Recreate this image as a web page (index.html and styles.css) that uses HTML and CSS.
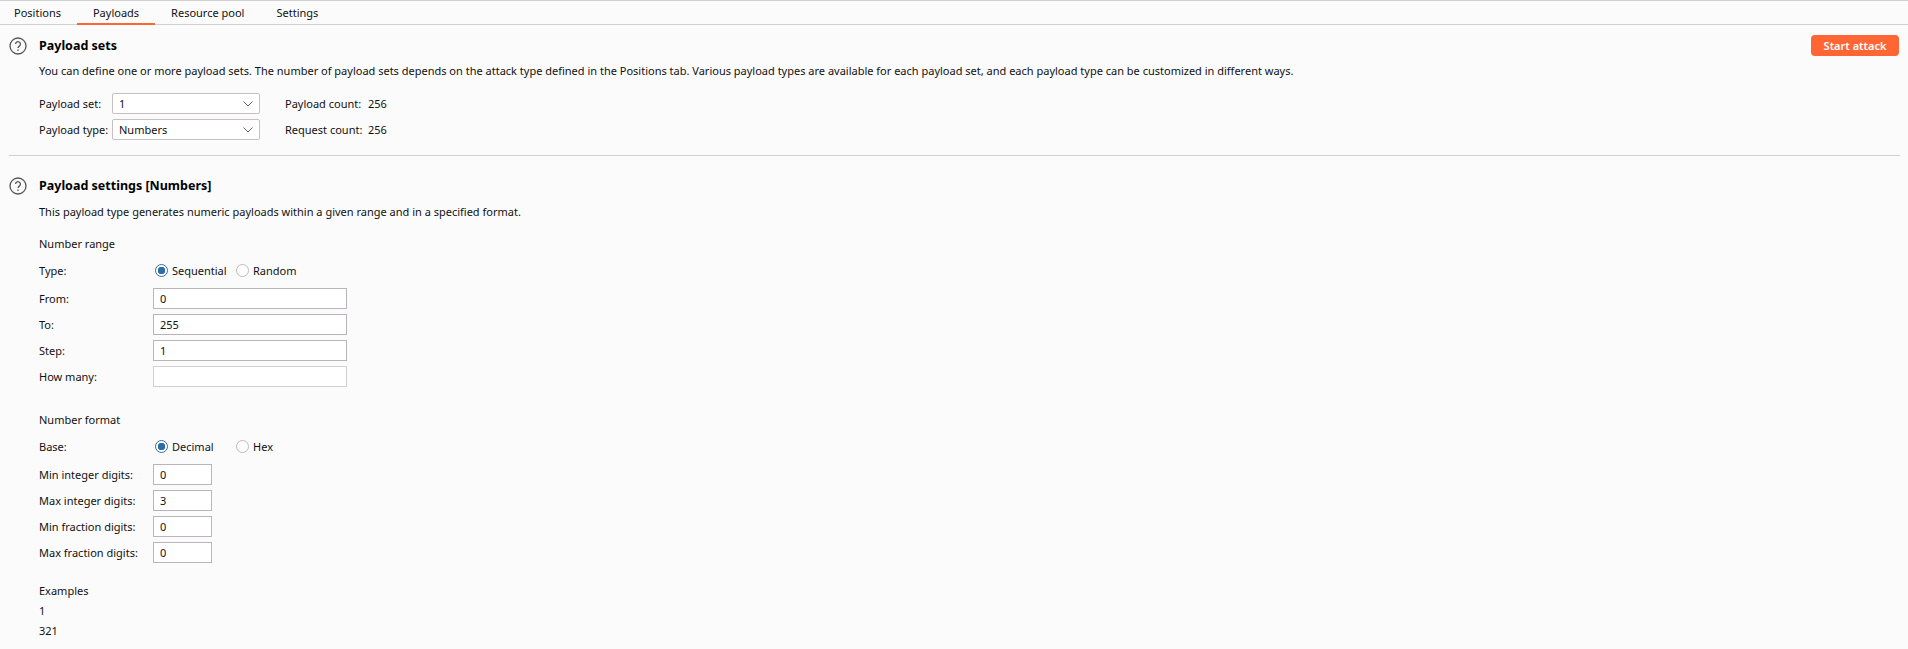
FILE: index.html
```html
<!DOCTYPE html>
<html lang="en">
  <head>
    <meta charset="UTF-8" />
    <title>Intruder payloads</title>
    <link rel="stylesheet" href="styles.css">
  </head>
  <body>
    <nav class="tabs">
      <a class="tab">Positions</a>
      <a class="tab tab-active">Payloads</a>
      <a class="tab">Resource pool</a>
      <a class="tab">Settings</a>
    </nav>

    <main class="content">
      <section class="section section-sets">
        <div class="section-head">
          <svg class="help" viewBox="0 0 18 18"><circle cx="9" cy="9" r="8" /><path d="M6.6 7.1a2.4 2.4 0 1 1 3.7 2c-.9.6-1.3 1-1.3 2" /><path d="M9 12.6v1.5" /></svg>
          <h2>Payload sets</h2>
          <button class="start-btn">Start attack</button>
        </div>
        <p class="desc">You can define one or more payload sets. The number of payload sets depends on the attack type defined in the Positions tab. Various payload types are available for each payload set, and each payload type can be customized in different ways.</p>
        <div class="set-row">
          <span class="set-label">Payload set:</span>
          <div class="select"><span>1</span><svg class="chevron" viewBox="0 0 10 6"><path d="M.5.5 5 5 9.5.5" /></svg></div>
          <span class="count-label">Payload count:</span>
          <span>256</span>
        </div>
        <div class="set-row">
          <span class="set-label">Payload type:</span>
          <div class="select"><span>Numbers</span><svg class="chevron" viewBox="0 0 10 6"><path d="M.5.5 5 5 9.5.5" /></svg></div>
          <span class="count-label">Request count:</span>
          <span>256</span>
        </div>
      </section>

      <section class="section section-settings">
        <div class="section-head">
          <svg class="help" viewBox="0 0 18 18"><circle cx="9" cy="9" r="8" /><path d="M6.6 7.1a2.4 2.4 0 1 1 3.7 2c-.9.6-1.3 1-1.3 2" /><path d="M9 12.6v1.5" /></svg>
          <h2>Payload settings [Numbers]</h2>
        </div>
        <p class="desc">This payload type generates numeric payloads within a given range and in a specified format.</p>

        <h3 class="group-title">Number range</h3>
        <div class="radio-row">
          <span class="field-label">Type:</span>
          <span class="radio radio-on"></span><span class="radio-text">Sequential</span>
          <span class="radio"></span><span class="radio-text">Random</span>
        </div>
        <div class="field-row"><span class="field-label">From:</span><div class="input">0</div></div>
        <div class="field-row"><span class="field-label">To:</span><div class="input">255</div></div>
        <div class="field-row"><span class="field-label">Step:</span><div class="input">1</div></div>
        <div class="field-row"><span class="field-label">How many:</span><div class="input input-off"></div></div>

        <h3 class="group-title group-format">Number format</h3>
        <div class="radio-row">
          <span class="field-label">Base:</span>
          <span class="radio radio-on"></span><span class="radio-text">Decimal</span>
          <span class="radio"></span><span class="radio-text">Hex</span>
        </div>
        <div class="field-row"><span class="field-label">Min integer digits:</span><div class="input input-small">0</div></div>
        <div class="field-row"><span class="field-label">Max integer digits:</span><div class="input input-small">3</div></div>
        <div class="field-row"><span class="field-label">Min fraction digits:</span><div class="input input-small">0</div></div>
        <div class="field-row"><span class="field-label">Max fraction digits:</span><div class="input input-small">0</div></div>

        <h3 class="group-title group-examples">Examples</h3>
        <div class="example">1</div>
        <div class="example">321</div>
      </section>
    </main>
  </body>
</html>
```

FILE: styles.css
```css
* {
  box-sizing: border-box;
}

html,
body {
  height: 100%;
}

body {
  margin: 0;
  padding-top: 1px;
  overflow: hidden;
  font-family: "Noto Sans", sans-serif;
  font-size: 11px;
  color: #111;
  background-color: #fbfbfb;
  border-top: 1px solid #d0d0d0;
}

.tabs {
  display: flex;
  height: 23px;
  border-bottom: 1px solid #d0d0d0;
}

.tab {
  display: flex;
  align-items: center;
  padding: 0 16px;
  height: 23px;
  padding-bottom: 2px;
  font-size: 11px;
}

.tab:first-child {
  padding-left: 14px;
}

.tab-active {
  padding: 0 16px;
  border-bottom: 2px solid #ff6633;
}

.content {
  padding: 0 8px 0 9px;
}

.section-sets {
  height: 131px;
  padding-top: 10px;
  border-bottom: 1px solid #d0d0d0;
}

.section-settings {
  padding-top: 19px;
}

.section-head {
  display: flex;
  align-items: center;
  height: 21px;
}

.help {
  width: 18px;
  height: 18px;
  margin-right: 12px;
  fill: none;
  stroke: #555;
  stroke-width: 1.3;
}

h2 {
  margin: 0;
  font-size: 12.5px;
  font-weight: 700;
  color: #000;
}

.start-btn {
  margin: 0 1px 0 auto;
  width: 88px;
  height: 21px;
  padding: 0;
  border: none;
  border-radius: 4px;
  font-family: inherit;
  font-size: 11px;
  font-weight: 600;
  color: #fff;
  background-color: #ff6633;
}

.desc {
  margin: 7px 0 0 30px;
  line-height: 16px;
}

.section-settings .desc {
  margin-top: 8px;
}

.set-row {
  display: flex;
  align-items: center;
  height: 21px;
  margin: 5px 0 0 30px;
}

.desc + .set-row {
  margin-top: 14px;
}

.set-label {
  width: 73px;
}

.select {
  display: flex;
  align-items: center;
  justify-content: space-between;
  width: 148px;
  height: 21px;
  padding: 0 5px 0 6px;
  border: 1px solid #c4c0c4;
  border-radius: 2px;
  background-color: #fff;
}

.chevron {
  width: 10px;
  height: 6px;
  margin-right: 1px;
  fill: none;
  stroke: #666;
}

.count-label {
  width: 83px;
  margin-left: 25px;
}

.group-title {
  margin: 16px 0 0 30px;
  font-size: 11px;
  font-weight: 400;
  line-height: 16px;
}

.group-format {
  margin-top: 25px;
}

.group-examples {
  margin-top: 20px;
}

.radio-row,
.field-row {
  display: flex;
  align-items: center;
  height: 21px;
  margin: 5px 0 0 30px;
}

.radio-row {
  margin-top: 10px;
  height: 16px;
}

.field-label {
  width: 114px;
}

.radio {
  width: 13px;
  height: 13px;
  margin-left: 2px;
  border: 1px solid #bbb;
  border-radius: 50%;
  background-color: #fff;
}

.radio-on {
  border: 1.5px solid #2f6ea5;
  background: radial-gradient(circle, #2f6ea5 0 3.5px, #fff 4px);
}

.radio-text {
  width: 62px;
  margin-left: 4px;
}

.radio-row .radio-text:nth-of-type(n + 4) {
  width: auto;
}

.radio-row + .field-row {
  margin-top: 10px;
}

.input {
  width: 194px;
  height: 21px;
  padding: 0 6px;
  line-height: 19px;
  border: 1px solid #bab5ba;
  background-color: #fff;
}

.input-off {
  border-color: #d0d0d0;
}

.input-small {
  width: 59px;
}

.example {
  margin: 4px 0 0 30px;
  line-height: 16px;
}
```
